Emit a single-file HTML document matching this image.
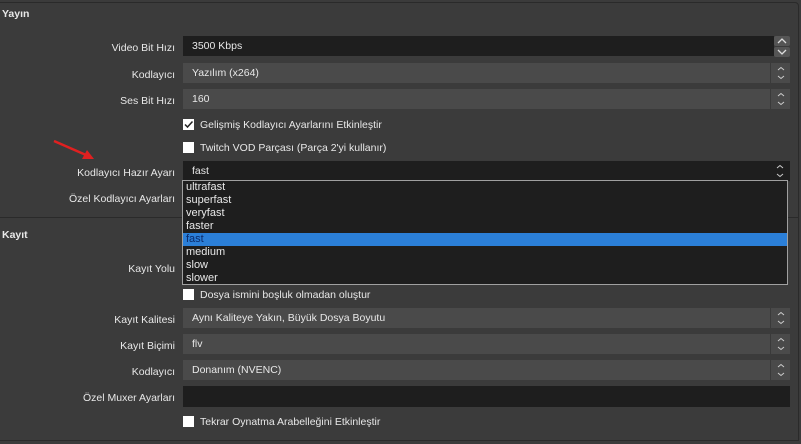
<!DOCTYPE html>
<html><head><meta charset="utf-8"><style>
body{margin:0;width:801px;height:444px;background:#3b3b3b;font-family:"Liberation Sans",sans-serif;font-size:10.5px;color:#e8e8e8;position:relative;overflow:hidden}
.a{position:absolute}
.lbl{position:absolute;right:626px;text-align:right;white-space:nowrap}
.f{position:absolute;left:183px;width:607px;height:20px;box-sizing:border-box;padding-left:9px;line-height:21px}
.g{background:#4a4a4a}
.d{background:#1e1e1e}
.sp{position:absolute;right:0;top:0;width:20px;height:100%;border-left:1px solid #3a3a3a;box-sizing:border-box}
.sp svg{position:absolute;left:5px;top:3px}
.cb{position:absolute;left:183px;width:11px;height:11px;background:#fff}
.ct{position:absolute;left:200px;white-space:nowrap}
.it{height:13px;line-height:13px;padding-left:3px;font-size:11px}
</style></head><body>
<div class="a" style="left:0;top:2px;width:798px;height:214px;border-top:1px solid #2a2a2a;border-right:1px solid #2a2a2a;border-radius:0 4px 0 0"></div>
<div class="a" style="left:0;top:217px;width:798px;height:222px;border-top:1px solid #2a2a2a;border-right:1px solid #2a2a2a;border-bottom:1px solid #2a2a2a"></div>
<div class="a" style="left:2px;top:8px;font-weight:bold">Yayın</div>
<div class="a" style="left:2px;top:229px;font-weight:bold">Kayıt</div>

<div class="lbl" style="top:42px">Video Bit Hızı</div>
<div class="f d" style="top:36px;width:591px">3500 Kbps</div>
<div class="a" style="left:774px;top:36px;width:16px;height:10px;background:#555;border-radius:2px"><svg width="16" height="10"><path d="M4 7L8 3L12 7" stroke="#ddd" stroke-width="1.3" fill="none"/></svg></div>
<div class="a" style="left:774px;top:47px;width:16px;height:10px;background:#555;border-radius:2px"><svg width="16" height="10"><path d="M4 3L8 7L12 3" stroke="#ddd" stroke-width="1.3" fill="none"/></svg></div>

<div class="lbl" style="top:69px">Kodlayıcı</div>
<div class="f g" style="top:63px">Yazılım (x264)<div class="sp"><svg width="10" height="14"><path d="M2 4L5 1.5L8 4M2 10L5 12.5L8 10" stroke="#ccc" fill="none"/></svg></div></div>
<div class="lbl" style="top:95px">Ses Bit Hızı</div>
<div class="f g" style="top:89px">160<div class="sp"><svg width="10" height="14"><path d="M2 4L5 1.5L8 4M2 10L5 12.5L8 10" stroke="#ccc" fill="none"/></svg></div></div>

<div class="cb" style="top:119px"><svg width="11" height="11"><path d="M2 5.5L4.5 8L9.5 2.5" stroke="#222" stroke-width="1.5" fill="none"/></svg></div>
<div class="ct" style="top:119px">Gelişmiş Kodlayıcı Ayarlarını Etkinleştir</div>
<div class="cb" style="top:142px"></div>
<div class="ct" style="top:142px">Twitch VOD Parçası (Parça 2'yi kullanır)</div>

<svg class="a" style="left:50px;top:138px" width="50" height="26"><line x1="4" y1="3" x2="36" y2="17" stroke="#e02020" stroke-width="2.5"/><polygon points="44,21 32,21 37,12" fill="#e02020"/></svg>

<div class="lbl" style="top:167px">Kodlayıcı Hazır Ayarı</div>
<div class="f d" style="top:161px">fast<div class="sp" style="border:none"><svg width="10" height="14"><path d="M2 4L5 1.5L8 4M2 10L5 12.5L8 10" stroke="#ccc" fill="none"/></svg></div></div>
<div class="lbl" style="top:193px">Özel Kodlayıcı Ayarları</div>

<div class="lbl" style="top:263px">Kayıt Yolu</div>
<div class="cb" style="top:289px"></div>
<div class="ct" style="top:289px">Dosya ismini boşluk olmadan oluştur</div>

<div class="a" style="left:182px;top:180px;width:606px;height:105px;background:#1e1e1e;border:1px solid #a0a0a0;box-sizing:border-box">
<div class="it">ultrafast</div><div class="it">superfast</div><div class="it">veryfast</div><div class="it">faster</div>
<div class="it" style="background:#2b7fd8;color:#0a2a6a">fast</div><div class="it">medium</div><div class="it">slow</div><div class="it">slower</div>
</div>

<div class="lbl" style="top:314px">Kayıt Kalitesi</div>
<div class="f g" style="top:308px">Aynı Kaliteye Yakın, Büyük Dosya Boyutu<div class="sp"><svg width="10" height="14"><path d="M2 4L5 1.5L8 4M2 10L5 12.5L8 10" stroke="#ccc" fill="none"/></svg></div></div>
<div class="lbl" style="top:340px">Kayıt Biçimi</div>
<div class="f g" style="top:334px">flv<div class="sp"><svg width="10" height="14"><path d="M2 4L5 1.5L8 4M2 10L5 12.5L8 10" stroke="#ccc" fill="none"/></svg></div></div>
<div class="lbl" style="top:366px">Kodlayıcı</div>
<div class="f g" style="top:360px">Donanım (NVENC)<div class="sp"><svg width="10" height="14"><path d="M2 4L5 1.5L8 4M2 10L5 12.5L8 10" stroke="#ccc" fill="none"/></svg></div></div>
<div class="lbl" style="top:392px">Özel Muxer Ayarları</div>
<div class="f d" style="top:386px;height:21px"></div>
<div class="cb" style="top:416px"></div>
<div class="ct" style="top:416px">Tekrar Oynatma Arabelleğini Etkinleştir</div>
</body></html>
